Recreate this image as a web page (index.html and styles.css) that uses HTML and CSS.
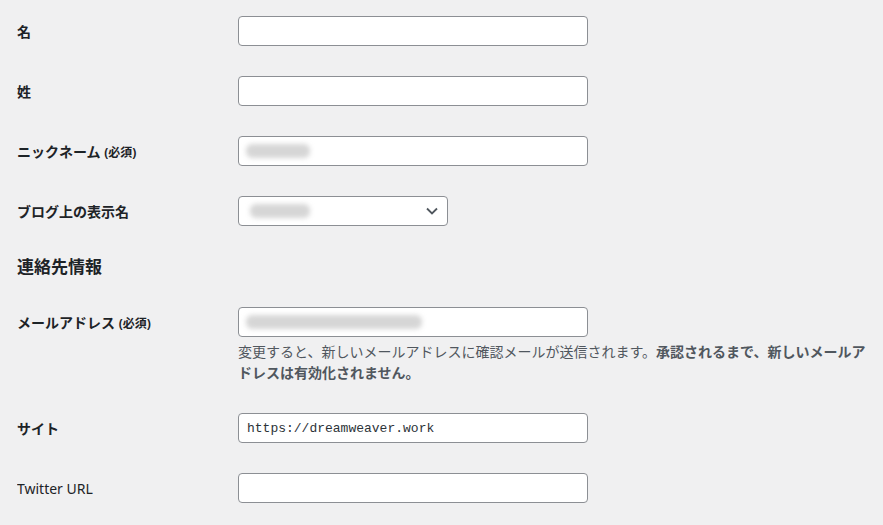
FILE: index.html
```html
<!DOCTYPE html>
<html lang="ja">
<head>
    <meta charset="UTF-8">
    <title>プロフィール</title>
    <link rel="stylesheet" href="styles.css">
</head>
<body>

    <div class="profile">
        <div class="row">
            <label class="row-label">名</label>
            <div class="row-field"><div class="input"></div></div>
        </div>

        <div class="row">
            <label class="row-label">姓</label>
            <div class="row-field"><div class="input"></div></div>
        </div>

        <div class="row">
            <label class="row-label">ニックネーム <span class="required">(必須)</span></label>
            <div class="row-field"><div class="input"><span class="blur blur-nick"></span></div></div>
        </div>

        <div class="row">
            <label class="row-label">ブログ上の表示名</label>
            <div class="row-field">
                <div class="select">
                    <span class="blur blur-select"></span>
                    <svg class="chevron" width="12" height="8" viewBox="0 0 12 8">
                        <path d="M1 1.5 L6 6.5 L11 1.5" fill="none" stroke="#50575e" stroke-width="1.8"/>
                    </svg>
                </div>
            </div>
        </div>

        <h2 class="section-title">連絡先情報</h2>

        <div class="row">
            <label class="row-label">メールアドレス <span class="required">(必須)</span></label>
            <div class="row-field">
                <div class="input"><span class="blur blur-mail"></span></div>
                <p class="description">変更すると、新しいメールアドレスに確認メールが送信されます。<strong>承認されるまで、新しいメールアドレスは有効化されません。</strong></p>
            </div>
        </div>

        <div class="row">
            <label class="row-label">サイト</label>
            <div class="row-field"><div class="input input-code">https://dreamweaver.work</div></div>
        </div>

        <div class="row">
            <label class="row-label row-label-light">Twitter URL</label>
            <div class="row-field"><div class="input"></div></div>
        </div>
    </div>

</body>
</html>
```

FILE: styles.css
```css
body {
    margin: 0;
    background-color: #f0f0f1;
    color: #1d2327;
    font-family: "Noto Sans", "Noto Sans CJK JP", sans-serif;
    font-size: 14px;
}

.profile {
    padding: 1px 10px 0 17px;
}

.row {
    display: flex;
    align-items: flex-start;
    padding: 15px 0;
}

.row-label {
    display: block;
    width: 221px;
    flex-shrink: 0;
    height: 30px;
    line-height: 32px;
    overflow: hidden;
    font-size: 14px;
    font-weight: 700;
}

.row-label-light {
    font-weight: 400;
}

.required {
    font-size: 12px;
    font-weight: 700;
}

.row-field {
    flex: 1;
}

.input, .select {
    box-sizing: border-box;
    width: 350px;
    height: 30px;
    background-color: #fff;
    border: 1px solid #8c8f94;
    border-radius: 4px;
    display: flex;
    align-items: center;
    padding: 0 7px;
}

.select {
    width: 210px;
    justify-content: space-between;
    padding: 0 9px 0 11px;
}

.input-code {
    padding-left: 8px;
    font-family: "Liberation Mono", "DejaVu Sans Mono", monospace;
    font-size: 13px;
    color: #2c3338;
}

/* zones floutées du reference */
.blur {
    display: block;
    height: 14px;
    background-color: #d6d6d6;
    border-radius: 6px;
    filter: blur(2.5px);
}

.blur-nick {
    width: 64px;
}

.blur-select {
    width: 60px;
}

.blur-mail {
    width: 176px;
}

.chevron {
    display: block;
}

.section-title {
    margin: 14px 0 13px;
    font-size: 17px;
    line-height: 24px;
    font-weight: 700;
}

.description {
    margin: 4px 0 0;
    font-size: 14px;
    line-height: 21px;
    color: #50575e;
}

.description strong {
    font-weight: 700;
}
```
